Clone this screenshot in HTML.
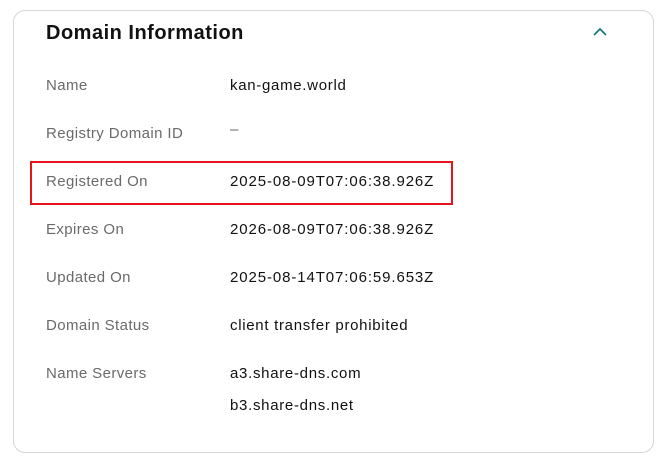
<!DOCTYPE html>
<html><head><style>
body{margin:0;width:666px;height:462px;background:#fff;font-family:"Liberation Sans",sans-serif;position:relative;overflow:hidden}
.card{position:absolute;left:13px;top:10px;width:641px;height:443px;border:1px solid #d6d6d6;border-radius:12px;box-sizing:border-box}
.t{position:absolute;left:46px;top:22px;font-size:20px;font-weight:bold;color:#111;letter-spacing:0.5px}
.l,.v{position:absolute;font-size:15px;line-height:18px}
.l{left:46px;color:#6a6a6a;letter-spacing:0.4px}
.v{left:230px;color:#111;letter-spacing:0.7px}
.d{letter-spacing:0.9px}
.box{position:absolute;left:30px;top:161px;width:423px;height:44px;border:2px solid #e8141c;box-sizing:border-box}
</style></head><body>
<div class="card"></div>
<div class="t">Domain Information</div>
<svg style="position:absolute;left:591px;top:26px" width="18" height="12" viewBox="0 0 18 12"><path d="M3 9 L9 3 L15 9" fill="none" stroke="#1b7a74" stroke-width="1.8"/></svg>
<div class="l" style="top:77px">Name</div><div class="v" style="top:77px">kan-game.world</div>
<div class="l" style="top:125px">Registry Domain ID</div><div class="v" style="top:121px;color:#666">–</div>
<div class="box"></div>
<div class="l" style="top:173px">Registered On</div><div class="v d" style="top:173px">2025-08-09T07:06:38.926Z</div>
<div class="l" style="top:221px">Expires On</div><div class="v d" style="top:221px">2026-08-09T07:06:38.926Z</div>
<div class="l" style="top:269px">Updated On</div><div class="v d" style="top:269px">2025-08-14T07:06:59.653Z</div>
<div class="l" style="top:317px">Domain Status</div><div class="v" style="top:317px">client transfer prohibited</div>
<div class="l" style="top:365px">Name Servers</div><div class="v" style="top:365px">a3.share-dns.com</div>
<div class="v" style="top:397px">b3.share-dns.net</div>
</body></html>
